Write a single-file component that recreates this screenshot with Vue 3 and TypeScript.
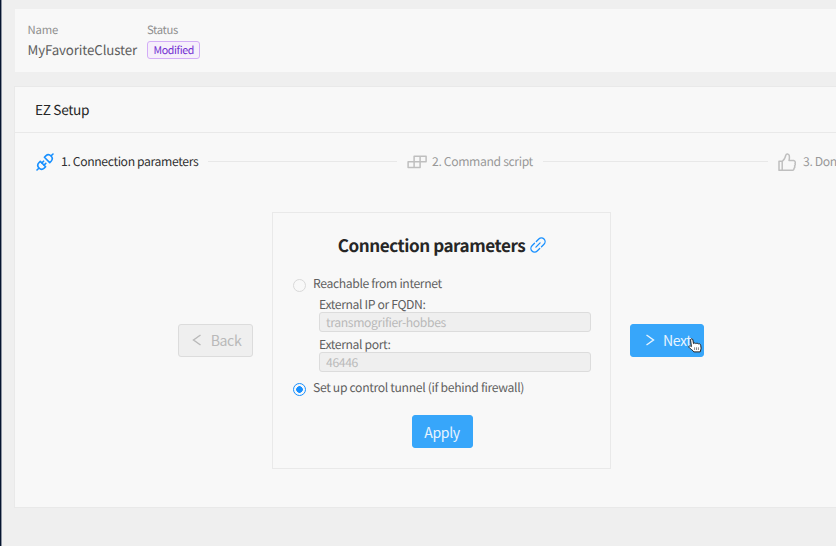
<script setup lang="ts">
import { ref } from 'vue'

type Mode = 'internet' | 'tunnel'

const mode = ref<Mode>('tunnel')
const host = ref('transmogrifier-hobbes')
const port = ref('46446')
</script>

<template>
  <div class="page">
    <aside class="edge"></aside>
    <main class="content">
      <section class="summary">
        <div class="field">
          <span class="label">Name</span>
          <span class="value">MyFavoriteCluster</span>
        </div>
        <div class="field">
          <span class="label status">Status</span>
          <span class="tag">Modified</span>
        </div>
      </section>

      <section class="card">
        <header class="card-head">EZ Setup</header>
        <div class="steps">
          <div class="step active">
            <svg class="step-icon" viewBox="0 0 18 18" width="18" height="18">
              <g fill="none" stroke="currentColor" stroke-width="1.6" stroke-linejoin="round" stroke-linecap="round">
                <path d="M4.300 8.400 9.600 13.700 8.200 15.100a3.750 3.750 0 0 1-5.300-5.300z" />
                <path d="M8.400 4.300 13.700 9.600 15.100 8.200a3.750 3.750 0 0 0-5.300-5.300z" />
                <path d="M2.800 15.200 1 17M15.200 2.800 17 1M5.900 9.900 7.600 8.200M8.100 12.100 9.800 10.400" />
              </g>
            </svg>
            <span class="step-title">1. Connection parameters</span>
            <i class="line"></i>
          </div>
          <div class="step">
            <svg class="step-icon wide" viewBox="0 0 20 18" width="20" height="18">
              <path d="M7.100 3.200h12v5.600h-12zM13.100 3.200v5.600M1.100 8.800h12v5.600h-12zM7.100 8.800v5.600" fill="none" stroke="currentColor" stroke-width="1.500" stroke-linejoin="round" />
            </svg>
            <span class="step-title">2. Command script</span>
            <i class="line"></i>
          </div>
          <div class="step last">
            <svg class="step-icon" viewBox="0 0 18 18" width="18" height="18">
              <path d="M4.200 8.300H1v9h13.200c1.200 0 1.900-.7 1.800-2 .8-.6 1-1.500.6-2.400.7-.7.8-1.600.4-2.400.6-.7.5-2.400-1.400-2.900h-4.600c.5-1.900.5-3.600.2-5.200C10.800.7 8.300.2 7.800 2.200 7.300 4.800 6.100 7.200 4.200 8.300zM4.200 8.300v9" fill="none" stroke="currentColor" stroke-width="1.500" stroke-linejoin="round" />
            </svg>
            <span class="step-title">3. Done</span>
          </div>
        </div>

        <div class="wizard">
          <button class="btn back" disabled>
            <svg viewBox="0 0 10 12" width="10" height="12"><path d="M8.500 1 1.500 6l7 5" fill="none" stroke="currentColor" stroke-width="1.400" /></svg>
            <span>Back</span>
          </button>

          <form class="panel" @submit.prevent>
            <h2>
              <span>Connection parameters</span>
              <svg viewBox="0 0 16 16" width="16" height="16">
                <g fill="none" stroke="currentColor" stroke-width="1.300" stroke-linecap="round">
                  <path d="m6.300 4.500 2.500-2.500a3.300 3.300 0 0 1 5.200 5.200l-2.500 2.500M9.700 11.500 7.200 14A3.300 3.300 0 0 1 2 8.800l2.500-2.500M5.900 10.100l4.200-4.200" />
                </g>
              </svg>
            </h2>
            <label class="option">
              <input v-model="mode" type="radio" value="internet" />
              <span>Reachable from internet</span>
            </label>
            <div class="inputs">
              <label for="host">External IP or FQDN:</label>
              <input id="host" v-model="host" :disabled="mode === 'tunnel'" />
              <label for="port">External port:</label>
              <input id="port" v-model="port" :disabled="mode === 'tunnel'" />
            </div>
            <label class="option second">
              <input v-model="mode" type="radio" value="tunnel" />
              <span>Set up control tunnel (if behind firewall)</span>
            </label>
            <button class="btn apply">Apply</button>
          </form>

          <button class="btn next">
            <svg viewBox="0 0 10 12" width="10" height="12"><path d="m1.500 1 7 5-7 5" fill="none" stroke="currentColor" stroke-width="1.400" /></svg>
            <span>Next</span>
            <svg class="pointer" viewBox="0 0 14 15" width="14" height="15">
              <path d="M3.400 8.600 2.600 2.100C2.500.4 4.600.3 4.900 1.900L5.500 5.600C6.200 4.700 7.600 4.900 7.900 5.700 8.700 4.900 10 5.200 10.300 6 11.300 5.500 12.600 5.900 12.700 7.200L13.100 10.200C13.200 11.700 12.400 12.300 12.200 13.900H5.800C5.200 12.300 2.500 11.300 1 9.300.4 7.900 2 7.200 3.400 8.600z" fill="#fff" stroke="#222" stroke-width="1" stroke-linejoin="round" />
              <path d="M6.600 9.300v2.700M8.500 9.300v2.700M10.400 9.300v2.700" stroke="#555" stroke-width=".7" />
            </svg>
          </button>
        </div>
      </section>
    </main>
  </div>
</template>

<style>
body {
  overflow: hidden;
  background: #efefef;
}
</style>

<style scoped>
.page,
.page * {
  box-sizing: border-box;
}
.page {
  display: flex;
  width: 836px;
  height: 546px;
  overflow: hidden;
  background: #efefef;
  color: #5f5f5f;
  font: 12.200px/18px "Noto Sans CJK SC", "Noto Sans", sans-serif;
  letter-spacing: -0.37px;
  text-rendering: geometricPrecision;
  white-space: nowrap;
}
.edge {
  flex: none;
  width: 2px;
  background: #06152f;
  border-right: 1px solid #8c93a0;
}
.content {
  flex: none;
  width: 1163px;
  padding: 9px 0 0 12px;
}
.summary {
  display: flex;
  gap: 10px;
  height: 63px;
  margin-left: 1px;
  padding: 12px 12.500px 0;
  background: #f8f8f8;
}
.field {
  display: flex;
  flex-direction: column;
  align-items: flex-start;
}
.label {
  color: #8f8f8f;
  font-size: 11.300px;
  letter-spacing: -0.2px;
  line-height: 18px;
}
.label.status {
  letter-spacing: -0.35px;
}
.value {
  font-size: 13.300px;
  letter-spacing: -0.12px;
  line-height: 22px;
}
.tag {
  height: 18px;
  margin-top: 1.500px;
  padding: 0 5.500px;
  border: 1px solid #d3adf7;
  border-radius: 3px;
  background: #f6effb;
  color: #722ed1;
  font-size: 10.600px;
  letter-spacing: -0.36px;
  line-height: 17px;
}
.card {
  height: 422px;
  margin-top: 14px;
  border: 1px solid #e9e9e9;
  background: #f8f8f8;
}
.card-head {
  height: 46px;
  padding-left: 20px;
  border-bottom: 1px solid #e9e9e9;
  color: #262626;
  font-size: 13.700px;
  letter-spacing: -0.35px;
  line-height: 45px;
}
.steps {
  display: flex;
  gap: 10px;
  height: 56px;
  padding: 0 21px;
}
.step {
  display: flex;
  flex: none;
  align-items: center;
  width: 361px;
  color: #999;
}
.step.active {
  color: #303030;
}
.step-title {
  margin-top: -1px;
}
.step-icon {
  flex: none;
  margin-top: 1px;
  margin-right: 7px;
  color: #bfbfbf;
}
.step-icon.wide {
  margin-right: 5.500px;
  margin-left: -0.500px;
}
.active .step-icon {
  color: #1890ff;
}
.line {
  flex: 1;
  height: 1px;
  margin-left: 10px;
  background: #e8e8e8;
}
.wizard {
  display: flex;
  align-items: center;
  gap: 19px;
  margin: 23px 0 0 163px;
}
.btn {
  display: flex;
  position: relative;
  flex: none;
  align-items: center;
  justify-content: center;
  height: 33px;
  padding: 0 0 1px;
  border: 1px solid #37a6fa;
  border-radius: 3px;
  background: #37a6fa;
  color: #e8f4fe;
  font: 14.100px/20px "Noto Sans CJK SC", "Noto Sans", sans-serif;
  letter-spacing: -0.4px;
}
.back {
  width: 75px;
  gap: 9px;
  padding-left: 2px;
  border-color: #dcdcdc;
  background: #efefef;
  color: #b9b9b9;
}
.next {
  width: 74px;
  gap: 8px;
  padding-left: 2px;
}
.pointer {
  position: absolute;
  top: 13px;
  left: 57px;
}
.panel {
  display: flex;
  flex: none;
  flex-direction: column;
  width: 339px;
  height: 257px;
  padding: 19px 19px 0 20px;
  border: 1px solid #e9e9e9;
}
h2 {
  display: flex;
  align-items: center;
  justify-content: center;
  gap: 5px;
  margin: 0;
  color: #262626;
  font-size: 17.100px;
  font-weight: 700;
  letter-spacing: -0.46px;
  line-height: 26px;
}
h2 svg {
  color: #1890ff;
}
.option {
  display: flex;
  gap: 7px;
  height: 20px;
  margin-top: 16px;
}
.option input {
  flex: none;
  appearance: none;
  width: 13px;
  height: 13px;
  margin: 5px 0 0;
  border: 1px solid #d9d9d9;
  border-radius: 50%;
}
.option input:checked {
  border-color: #1890ff;
  background: radial-gradient(circle, #1890ff 3px, transparent 3.600px);
}
.inputs {
  display: flex;
  flex-direction: column;
  padding-left: 26px;
}
.inputs label {
  height: 17px;
  margin-top: 3px;
  line-height: 19px;
}
.inputs label:first-child {
  margin-top: 1px;
}
.inputs input {
  width: 272px;
  height: 20px;
  padding: 0 6px 1px;
  border: 1px solid #dcdcdc;
  border-radius: 3px;
  background: #efefef;
  color: #b9b9b9;
  font: 12.200px/17px "Noto Sans CJK SC", "Noto Sans", sans-serif;
  letter-spacing: -0.37px;
  text-rendering: geometricPrecision;
}
.second {
  margin-top: 6px;
}
.second span {
  letter-spacing: -0.34px;
}
.apply {
  align-self: center;
  width: 61px;
  margin-top: 17px;
  padding-bottom: 0;
}
</style>
